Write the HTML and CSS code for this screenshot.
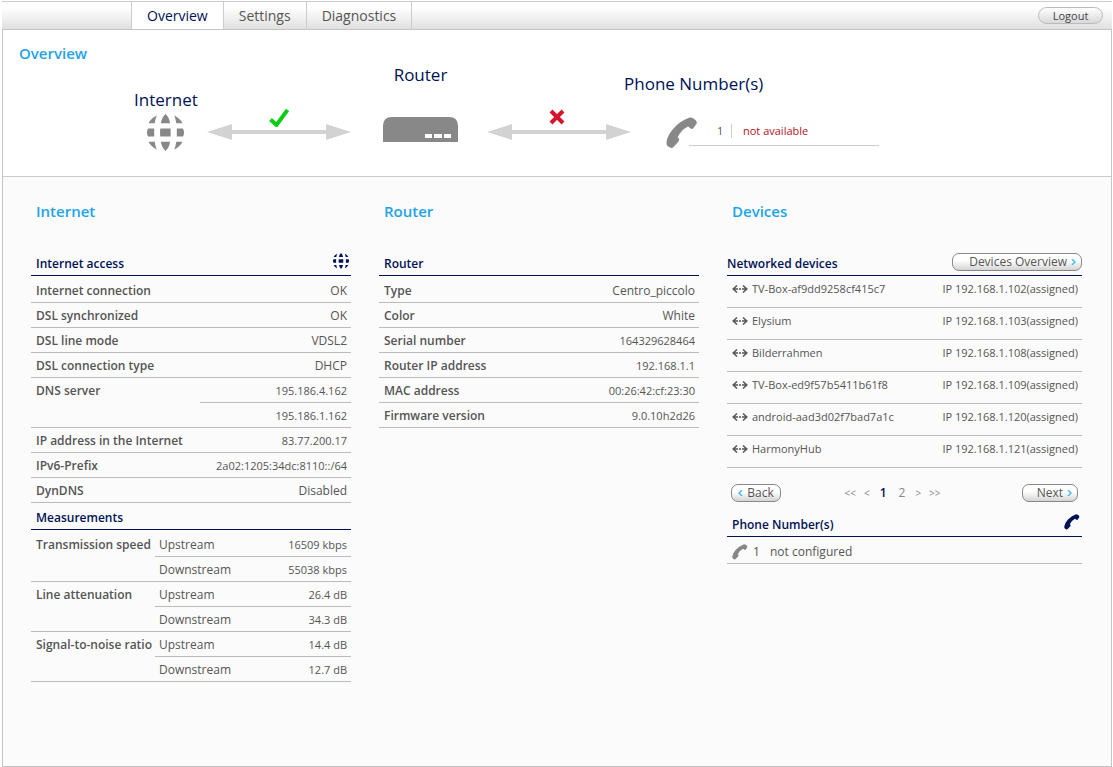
FILE: index.html
```html
<!DOCTYPE html>
<html lang="en">
<head>
<meta charset="utf-8">
<title>Overview</title>
<link rel="stylesheet" href="styles.css">
</head>
<body>
<svg class="defs" aria-hidden="true">
  <symbol id="globe" viewBox="0 0 36 36">
    <path d="M9.500 1.500 Q4 4 1.500 9H7.500Q8 5 9.500 1.500ZM26.500 1.500Q32 4 34.500 9H28.500Q28 5 26.500 1.500ZM18 0Q14.500 3 13.500 9H22.500Q21.500 3 18 0ZM1 14H7V22H1Q-1 18 1 14ZM13 14H23V22H13Q12.400 18 13 14ZM29 14H35Q37 18 35 22H29ZM1.500 27H7.500Q8 31 9.500 34.500Q4 32 1.500 27ZM34.500 27H28.500Q28 31 26.500 34.500Q32 32 34.500 27ZM13.500 27H22.500Q21.500 33 18 36Q14.500 33 13.500 27Z"/>
  </symbol>
  <symbol id="phone" viewBox="0 0 32 32">
    <path d="M23 .8Q25 0 27.500 1.500L30 3.500Q31.500 5.500 30 7.500L27 11.500Q25.500 12.500 24 11L22 9.500Q15 13 11.500 20.500L13 21.500Q13.500 23 12.500 24.500L7.500 30Q6 31.500 4 30.500L1.500 29Q.5 28 .5 25Q1.500 18 8 11Q15 3.500 23 .8Z"/>
  </symbol>
  <symbol id="link" viewBox="0 0 16 8">
    <path d="M5 .5L1.200 4L5 7.500M11 .5L14.800 4L11 7.500M2 4H6M7 4H9M10 4H14" fill="none" stroke="currentColor" stroke-width="1.500"/>
  </symbol>
  <symbol id="arrow" viewBox="0 0 144 16">
    <path d="M0 8L25 0V6H119V0L144 8L119 16V10H25V16Z"/>
  </symbol>
</svg>

<header class="topbar">
  <nav class="tabs">
    <a class="tab current" href="#overview" aria-current="page">Overview</a>
    <a class="tab" href="#settings">Settings</a>
    <a class="tab" href="#diagnostics">Diagnostics</a>
  </nav>
  <button class="logout" type="button">Logout</button>
</header>

<main class="frame">
  <section class="status">
    <h1 class="title">Overview</h1>
    <div class="diagram">
      <div class="label label-internet">Internet</div>
      <div class="label label-router">Router</div>
      <div class="label label-phone">Phone Number(s)</div>
      <svg class="node node-globe" width="37" height="37"><use href="#globe"/></svg>
      <div class="connection connection-dsl">
        <svg class="mark" width="20" height="18" viewBox="0 0 20 18"><path d="M1.500 10.500L7.500 16L18.500 1" fill="none" stroke="#0ccc12" stroke-width="4"/></svg>
        <svg width="144" height="16"><use href="#arrow"/></svg>
      </div>
      <svg class="node node-router" width="75" height="25" viewBox="0 0 75 25"><path d="M0 25V9Q0 0 9 0H66Q75 0 75 9V25Z"/><path d="M42 17H49V21H42ZM51 17H59V21H51ZM61 17H68V21H61Z" fill="#fff"/></svg>
      <div class="connection connection-phone">
        <svg class="mark" width="20" height="18" viewBox="0 0 20 18"><path d="M2 2L14 14M14 2L2 14" fill="none" stroke="#d5132a" stroke-width="4"/></svg>
        <svg width="144" height="16"><use href="#arrow"/></svg>
      </div>
      <div class="line-state">
        <svg class="handset" width="32" height="32"><use href="#phone"/></svg>
        <p class="line-info"><span class="line-id">1</span><span class="unavailable">not available</span></p>
      </div>
    </div>
  </section>

  <div class="columns">
    <section>
      <h2 class="title">Internet</h2>
      <div class="panel-head"><h3>Internet access</h3><svg class="panel-icon" width="16" height="16"><use href="#globe"/></svg></div>
      <table class="facts">
        <tr><th scope="row">Internet connection</th><td>OK</td></tr>
        <tr><th scope="row">DSL synchronized</th><td>OK</td></tr>
        <tr><th scope="row">DSL line mode</th><td>VDSL2</td></tr>
        <tr><th scope="row">DSL connection type</th><td>DHCP</td></tr>
        <tr><th scope="rowgroup" rowspan="2">DNS server</th><td class="num">195.186.4.162</td></tr>
        <tr><td class="num">195.186.1.162</td></tr>
        <tr><th scope="row">IP address in the Internet</th><td class="num">83.77.200.17</td></tr>
        <tr><th scope="row">IPv6-Prefix</th><td class="num">2a02:1205:34dc:8110::/64</td></tr>
        <tr><th scope="row">DynDNS</th><td>Disabled</td></tr>
      </table>
      <div class="panel-head short"><h3>Measurements</h3></div>
      <table class="facts measures">
        <tr><th scope="rowgroup" rowspan="2">Transmission speed</th><td class="dir">Upstream</td><td class="num">16509 kbps</td></tr>
        <tr><td class="dir">Downstream</td><td class="num">55038 kbps</td></tr>
        <tr><th scope="rowgroup" rowspan="2">Line attenuation</th><td class="dir">Upstream</td><td class="num">26.4 dB</td></tr>
        <tr><td class="dir">Downstream</td><td class="num">34.3 dB</td></tr>
        <tr><th scope="rowgroup" rowspan="2">Signal-to-noise ratio</th><td class="dir">Upstream</td><td class="num">14.4 dB</td></tr>
        <tr><td class="dir">Downstream</td><td class="num">12.7 dB</td></tr>
      </table>
    </section>

    <section>
      <h2 class="title">Router</h2>
      <div class="panel-head"><h3>Router</h3></div>
      <table class="facts">
        <tr><th scope="row">Type</th><td>Centro_piccolo</td></tr>
        <tr><th scope="row">Color</th><td>White</td></tr>
        <tr><th scope="row">Serial number</th><td class="num">164329628464</td></tr>
        <tr><th scope="row">Router IP address</th><td class="num">192.168.1.1</td></tr>
        <tr><th scope="row">MAC address</th><td class="num">00:26:42:cf:23:30</td></tr>
        <tr><th scope="row">Firmware version</th><td class="num">9.0.10h2d26</td></tr>
      </table>
    </section>

    <section>
      <h2 class="title">Devices</h2>
      <div class="panel-head flush"><h3>Networked devices</h3><button class="button overview-button" type="button">Devices Overview<svg class="chevron" width="5" height="6" viewBox="0 0 5 6"><path d="M1 0L4 3L1 6"/></svg></button></div>
      <ul class="devices">
        <li><svg class="link" width="16" height="8"><use href="#link"/></svg><span>TV-Box-af9dd9258cf415c7</span><span class="ip">IP 192.168.1.102(assigned)</span></li>
        <li><svg class="link" width="16" height="8"><use href="#link"/></svg><span>Elysium</span><span class="ip">IP 192.168.1.103(assigned)</span></li>
        <li><svg class="link" width="16" height="8"><use href="#link"/></svg><span>Bilderrahmen</span><span class="ip">IP 192.168.1.108(assigned)</span></li>
        <li><svg class="link" width="16" height="8"><use href="#link"/></svg><span>TV-Box-ed9f57b5411b61f8</span><span class="ip">IP 192.168.1.109(assigned)</span></li>
        <li><svg class="link" width="16" height="8"><use href="#link"/></svg><span>android-aad3d02f7bad7a1c</span><span class="ip">IP 192.168.1.120(assigned)</span></li>
        <li><svg class="link" width="16" height="8"><use href="#link"/></svg><span>HarmonyHub</span><span class="ip">IP 192.168.1.121(assigned)</span></li>
      </ul>
      <div class="pager">
        <button class="button back" type="button"><svg class="chevron" width="5" height="6" viewBox="0 0 5 6"><path d="M4 0L1 3L4 6"/></svg>Back</button>
        <nav class="pages" aria-label="Pages">
          <a href="#first">&lt;&lt;</a><a href="#prev">&lt;</a><a class="page active" href="#1" aria-current="page">1</a><a class="page" href="#2">2</a><a href="#next">&gt;</a><a href="#last">&gt;&gt;</a>
        </nav>
        <button class="button next" type="button">Next<svg class="chevron" width="5" height="6" viewBox="0 0 5 6"><path d="M1 0L4 3L1 6"/></svg></button>
      </div>
      <div class="panel-head short"><h3>Phone Number(s)</h3><svg class="panel-icon" width="16" height="16"><use href="#phone"/></svg></div>
      <p class="phone-row"><svg class="small-handset" width="16" height="16"><use href="#phone"/></svg><span class="phone-id">1</span><span>not configured</span></p>
    </section>
  </div>
</main>
</body>
</html>
```
FILE: styles.css
```css
* { box-sizing: border-box; }

body {
  display: flex;
  flex-direction: column;
  min-height: 100vh;
  margin: 0;
  padding: 1px 1px 0 2px;
  background: #fff;
  color: #555;
  font: 12px/18px "Trebuchet MS", "Open Sans", sans-serif;
}

h1, h2, h3, p, ul { margin: 0; padding: 0; }
a { color: inherit; text-decoration: none; }
svg { display: block; flex: none; fill: currentColor; }
.defs { position: absolute; width: 0; height: 0; }

.topbar {
  display: flex;
  align-items: center;
  justify-content: space-between;
  height: 29px;
  padding: 0 9px 0 129px;
  border-top: 1px solid #ccc;
  border-bottom: 1px solid #c4c4c4;
  background: linear-gradient(#fff 20%, #e0e0e0);
}
.tabs { display: flex; align-self: stretch; border-left: 1px solid #ccc; }
.tab {
  padding: 0 15px;
  border-right: 1px solid #ccc;
  font-size: 14px;
  line-height: 27px;
}
.tab.current { background: #fff; color: #001155; }
.logout {
  width: 65px;
  height: 17px;
  padding: 0;
  border: 1px solid #bbb;
  border-radius: 9px;
  background: linear-gradient(#fff, #d8d8d8);
  color: #444;
  font: 11px/15px "Trebuchet MS", "Open Sans", sans-serif;
}

.frame {
  display: flex;
  flex: 1;
  flex-direction: column;
  border: 1px solid #c4c4c4;
  border-top: 0;
}
.title { margin-bottom: 2px; color: #1fa3e8; font-size: 15px; font-weight: 600; line-height: 18px; }

.status { padding: 14px 16px 23px; border-bottom: 1px solid #ccc; }
.diagram {
  display: grid;
  grid-template-columns: 73px 144px 32px 75px 29px 137px 7px 35px 213px;
  grid-template-rows: 9px 16px 20px 44px;
  padding-left: 115px;
}
.label { color: #001155; font-size: 17px; line-height: 22px; white-space: nowrap; }
.label-internet { grid-area: 3 / 1; }
.label-router { grid-area: 1 / 4 / 3 / 5; justify-self: center; }
.label-phone { grid-area: 2 / 7 / 4 / 10; }
.node { grid-row: 4; color: #888; }
.node-globe { grid-column: 1; margin: 5px 0 0 13px; }
.node-router { grid-column: 4; margin-top: 8px; }
.connection {
  display: flex;
  flex-direction: column;
  align-items: center;
  grid-row: 4;
  color: #d2d2d2;
}
.connection .mark { margin-bottom: -3px; }
.connection-dsl { grid-column: 2; }
.connection-phone { grid-column: 6 / 8; }
.line-state { display: flex; grid-area: 4 / 9; padding-top: 8px; }
.handset { color: #888; }
.line-info {
  display: flex;
  flex: 1;
  align-items: center;
  height: 29px;
  margin-left: -9px;
  padding-left: 28px;
  border-bottom: 1px solid #ccc;
  font-size: 11px;
  line-height: 14px;
}
.line-id { width: 15px; border-right: 1px solid #ccc; }
.unavailable { padding-left: 11px; color: #b5121b; }

.columns {
  display: grid;
  flex: 1;
  grid-template-columns: 320fr 320fr 355fr;
  align-items: start;
  gap: 28px;
  padding: 25px 29px 32px 28px;
  background: #fbfbfb;
}
.columns .title { padding-left: 5px; }

.panel-head {
  display: flex;
  align-items: flex-end;
  justify-content: space-between;
  height: 54px;
  padding: 0 2px 2px 5px;
  border-bottom: 1px solid #001155;
  color: #001155;
}
.panel-head.short { height: 27px; }
.panel-head.flush { padding: 0 0 2px; }
.panel-head h3 { font-size: 12px; font-weight: 600; line-height: 18px; }
.panel-icon { margin-bottom: 4px; }

.facts { width: 100%; border-collapse: separate; border-spacing: 0; }
.facts th, .facts td {
  height: 25px;
  padding: 4px 4px 2px 5px;
  border-bottom: 1px solid #bbb;
  line-height: 18px;
  vertical-align: top;
}
.facts tr:first-child > * { height: 27px; padding-top: 6px; }
.facts th { width: 169px; padding-right: 0; font-weight: 600; text-align: left; white-space: nowrap; }
.facts td { text-align: right; white-space: nowrap; }
.facts .num { font-size: 11px; }
.facts .dir { padding-left: 4px; text-align: left; }
.measures th { width: 124px; }

.button {
  display: flex;
  align-items: center;
  justify-content: center;
  gap: 4px;
  height: 18px;
  padding: 0 5px;
  border: 1px solid #888;
  border-radius: 7px;
  background: linear-gradient(#fff 40%, #d4d4d4);
  color: #555;
  font: 12px/16px "Trebuchet MS", "Open Sans", sans-serif;
}
.chevron { fill: none; stroke: #4db8ee; stroke-width: 1.5; }
.overview-button { justify-content: flex-end; width: 130px; margin-bottom: 2px; }

.devices { list-style: none; }
.devices li {
  display: flex;
  gap: 4px;
  height: 32px;
  padding: 4px 4px 0 5px;
  border-bottom: 1px solid #bbb;
  font-size: 11px;
}
.link { margin-top: 5px; }
.ip { margin-left: auto; }

.pager {
  display: flex;
  align-items: center;
  justify-content: space-between;
  height: 42px;
  padding: 7px 4px 0;
}
.pages { display: flex; align-items: center; gap: 8px; margin-right: 18px; color: #888; font-size: 10px; }
.page { padding: 0 2px; font-size: 12px; }
.page.active { color: #001155; font-weight: 600; }
.back { width: 50px; }
.next { justify-content: flex-end; width: 56px; }

.phone-row {
  display: flex;
  align-items: center;
  height: 27px;
  padding: 3px 5px 0;
  border-bottom: 1px solid #bbb;
}
.small-handset { color: #888; }
.phone-id { width: 22px; padding-left: 5px; }
```
